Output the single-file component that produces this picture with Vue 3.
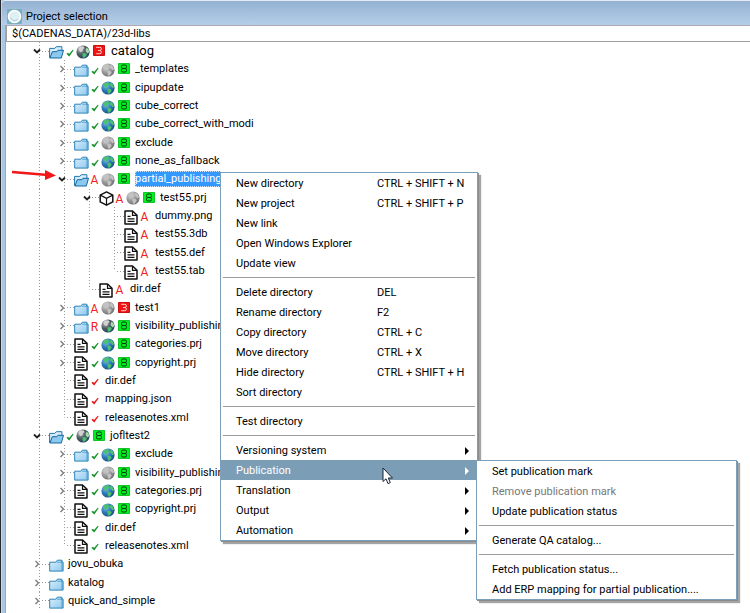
<script setup>
import { ref } from 'vue'

const path = ref('$(CADENAS_DATA)/23d-libs')

const node = (level, name, icon, toggle, status, globe, link, extra = {}) => ({
  level, name, icon, toggle, status, globe, link, ...extra,
})

const nodes = ref([
  node(0, 'catalog', 'folder-open', 'open', 'ok', 'mixed', 'broken', { large: true }),
  node(1, '_templates', 'folder', 'closed', 'ok', 'grey', 'linked'),
  node(1, 'cipupdate', 'folder', 'closed', 'ok', 'colour', 'linked'),
  node(1, 'cube_correct', 'folder', 'closed', 'ok', 'colour', 'linked'),
  node(1, 'cube_correct_with_modi', 'folder', 'closed', 'ok', 'colour', 'linked'),
  node(1, 'exclude', 'folder', 'closed', 'ok', 'grey', 'linked'),
  node(1, 'none_as_fallback', 'folder', 'closed', 'ok', 'colour', 'linked'),
  node(1, 'partial_publishing', 'folder-open', 'open', 'A', 'grey', 'linked', { selected: true }),
  node(2, 'test55.prj', 'cube', 'open', 'A', 'grey', 'linked'),
  node(3, 'dummy.png', 'doc', null, 'A'),
  node(3, 'test55.3db', 'doc', null, 'A'),
  node(3, 'test55.def', 'doc', null, 'A'),
  node(3, 'test55.tab', 'doc', null, 'A', null, null, { last: true }),
  node(2, 'dir.def', 'doc', null, 'A', null, null, { last: true }),
  node(1, 'test1', 'folder', 'closed', 'A', 'grey', 'broken'),
  node(1, 'visibility_publishing', 'folder', 'closed', 'R', 'mixed', 'linked'),
  node(1, 'categories.prj', 'doc', 'closed', 'ok', 'colour', 'linked'),
  node(1, 'copyright.prj', 'doc', 'closed', 'ok', 'colour', 'linked'),
  node(1, 'dir.def', 'doc', null, 'changed'),
  node(1, 'mapping.json', 'doc', null, 'changed'),
  node(1, 'releasenotes.xml', 'doc', null, 'changed', null, null, { last: true }),
  node(0, 'jofltest2', 'folder-open', 'open', 'ok', 'mixed', 'linked'),
  node(1, 'exclude', 'folder', 'closed', 'ok', 'colour', 'linked'),
  node(1, 'visibility_publishing', 'folder', 'closed', 'ok', 'grey', 'linked'),
  node(1, 'categories.prj', 'doc', 'closed', 'ok', 'colour', 'linked'),
  node(1, 'copyright.prj', 'doc', 'closed', 'ok', 'colour', 'linked'),
  node(1, 'dir.def', 'doc', null, 'ok'),
  node(1, 'releasenotes.xml', 'doc', null, 'ok', null, null, { last: true }),
  node(0, 'jovu_obuka', 'folder', 'closed'),
  node(0, 'katalog', 'folder', 'closed'),
  node(0, 'quick_and_simple', 'folder', 'closed'),
])

const menu = [
  [
    { label: 'New directory', keys: 'CTRL + SHIFT + N' },
    { label: 'New project', keys: 'CTRL + SHIFT + P' },
    { label: 'New link' },
    { label: 'Open Windows Explorer' },
    { label: 'Update view' },
  ],
  [
    { label: 'Delete directory', keys: 'DEL' },
    { label: 'Rename directory', keys: 'F2' },
    { label: 'Copy directory', keys: 'CTRL + C' },
    { label: 'Move directory', keys: 'CTRL + X' },
    { label: 'Hide directory', keys: 'CTRL + SHIFT + H' },
    { label: 'Sort directory' },
  ],
  [{ label: 'Test directory' }],
  [
    { label: 'Versioning system', sub: true },
    { label: 'Publication', sub: true, active: true },
    { label: 'Translation', sub: true },
    { label: 'Output', sub: true },
    { label: 'Automation', sub: true },
  ],
]

const submenu = [
  [
    { label: 'Set publication mark' },
    { label: 'Remove publication mark', disabled: true },
    { label: 'Update publication status' },
  ],
  [{ label: 'Generate QA catalog...' }],
  [
    { label: 'Fetch publication status...' },
    { label: 'Add ERP mapping for partial publication....' },
  ],
]

function select(item) {
  nodes.value.forEach((n) => { n.selected = n === item })
}
</script>

<template>
  <div class="window">
    <svg class="defs" aria-hidden="true">
      <defs>
        <linearGradient id="gFolder" x1="0" y1="0" x2="1" y2="1">
          <stop offset="0" stop-color="#d9effb" /><stop offset="1" stop-color="#8fc8ee" />
        </linearGradient>
        <radialGradient id="gBlue" cx=".35" cy=".3" r=".75">
          <stop offset="0" stop-color="#8cc4ec" /><stop offset=".5" stop-color="#2e7cbc" /><stop offset="1" stop-color="#1b4f86" />
        </radialGradient>
        <radialGradient id="gGrey" cx=".35" cy=".3" r=".75">
          <stop offset="0" stop-color="#e2e2e2" /><stop offset=".5" stop-color="#9c9c9c" /><stop offset="1" stop-color="#707070" />
        </radialGradient>
        <radialGradient id="gDark" cx=".3" cy=".3" r=".8">
          <stop offset="0" stop-color="#b4b4b4" /><stop offset=".5" stop-color="#4c5860" /><stop offset="1" stop-color="#1c4568" />
        </radialGradient>
        <symbol id="folder" viewBox="0 0 15 13">
          <path d="M.7 3.200h6.100l1.500-2h4.500v2h1.300v8.900H.7z" fill="url(#gFolder)" stroke="#2c83b8" />
          <path d="M8 3.200h5M13 1.500v10.200" fill="none" stroke="#3f96c9" stroke-width=".8" />
        </symbol>
        <symbol id="folder-open" viewBox="0 0 15 13">
          <path d="M.6 11.800V2.400h5.200l1.500-1.700h5.600v4" fill="#d5edfa" stroke="#2176ad" />
          <path d="M.9 12l2.400-6.300h4.600l1-1.400h5.600L12.300 12z" fill="#8cc9ef" stroke="#14669f" />
        </symbol>
        <symbol id="doc" viewBox="0 0 14 15">
          <path d="M1 1h7.500L13 5.300V14H1z" fill="#fff" stroke="#111" stroke-width="1.500" stroke-linejoin="round" />
          <path d="M8.500 1v4.300H13M3.500 6.300h3M3.500 8.800h7M3.500 11.300h7" fill="none" stroke="#111" stroke-width="1.200" />
        </symbol>
        <symbol id="cube" viewBox="0 0 15 15">
          <path d="M7.500.9l6.300 3.200v6.800l-6.300 3.300-6.300-3.300V4.100z" fill="#fff" stroke="#111" stroke-width="1.500" stroke-linejoin="round" />
          <path d="M1.200 4.100l6.300 3.200 6.300-3.200M7.500 7.300v6.900" fill="none" stroke="#111" stroke-width="1.200" />
        </symbol>
        <symbol id="globe-colour" viewBox="0 0 14 14">
          <circle cx="7" cy="7" r="6.600" fill="url(#gBlue)" />
          <path d="M4 1.400l3.200.2 1.200 1.700-1.600 1.200-.3 1.900-1.700.4-1.800-1.600-.6-2.100zM9.500 1.600l2.200 1.600 1.400 3-1.500 1-1.600-1.600-1.200-1.300zM6.400 7.400l3 .7 1.300 1.500-1.200 2-1.700 1.600-1.200-2.200z" fill="#4cc070" />
        </symbol>
        <symbol id="globe-grey" viewBox="0 0 14 14">
          <circle cx="7" cy="7" r="6.600" fill="url(#gGrey)" />
          <path d="M4 1.400l3.200.2 1.200 1.700-1.600 1.200-.3 1.900-1.700.4-1.800-1.600-.6-2.100zM9.500 1.600l2.200 1.600 1.400 3-1.500 1-1.600-1.600-1.200-1.300zM6.400 7.400l3 .7 1.300 1.500-1.200 2-1.700 1.600-1.200-2.200z" fill="#c2c2c2" />
        </symbol>
        <symbol id="globe-mixed" viewBox="0 0 14 14">
          <circle cx="7" cy="7" r="6.600" fill="url(#gDark)" />
          <path d="M4 1.200l3.600.2 1 1.700-1.800 1.400-.3 2-2 .4-1.900-1.600-.2-2.100z" fill="#d2d2d2" />
          <path d="M10.600 2.400l2 2.200.7 2.300-1.700 1.500-1.800-1.700-.2-2z" fill="#a4dba6" />
          <path d="M6.600 8.200l2.700-.3 1.600 1.700-1.300 2.200-2 1.300-1.100-2.200z" fill="#4cc070" />
        </symbol>
        <symbol id="check" viewBox="0 0 9 9">
          <path d="M.4 5.400l1.900-1.200 1.100 1.500L7.600.8l1 .5-4.900 7.200z" fill="currentColor" />
        </symbol>
        <symbol id="link-linked" viewBox="0 0 12 11">
          <path d="M.5.500h11v10H.5z" fill="#00f022" stroke="#10c428" />
          <rect x="3.500" y="2" width="5" height="3.500" rx="1.400" fill="none" stroke="#043a08" />
          <rect x="3.500" y="5.500" width="5" height="3.500" rx="1.400" fill="none" stroke="#043a08" />
        </symbol>
        <symbol id="link-broken" viewBox="0 0 12 11">
          <path d="M.5.500h11v10H.5z" fill="#f01414" stroke="#c81010" />
          <path d="M3.200 2.300h3.600a1.600 1.600 0 0 1 0 3.200H5M6.800 5.500a1.600 1.600 0 0 1 0 3.200H3.200" fill="none" stroke="#ffd4d0" />
        </symbol>
      </defs>
    </svg>

    <header class="titlebar">
      <svg class="logo" viewBox="0 0 15 15" aria-hidden="true">
        <rect width="15" height="15" rx="1" fill="#78aebf" />
        <circle cx="7.500" cy="7.500" r="6" fill="#dff0f5" stroke="#fff" stroke-width="1.600" />
        <path d="M3.500 8.500a4.200 4.200 0 0 0 7.500 1.500" fill="none" stroke="#a7ccd8" />
      </svg>
      <h1>Project selection</h1>
    </header>

    <input v-model="path" class="path" type="text" aria-label="Project path" spellcheck="false" />

    <main class="body">
      <ul class="tree" role="tree" aria-label="Projects">
        <li
          v-for="(item, i) in nodes"
          :key="i"
          class="row"
          role="treeitem"
          :aria-selected="!!item.selected"
          :aria-level="item.level + 1"
          @click="select(item)"
        >
          <span v-for="l in item.level" :key="l" class="guide"></span>
          <span class="branch" :class="{ last: item.last }">
            <button v-if="item.toggle" class="toggle" type="button" :aria-label="'Toggle ' + item.name">
              <svg v-if="item.toggle === 'open'" class="chevron open" viewBox="0 0 8 8"><path d="M1 2.500l3 3 3-3" /></svg>
              <svg v-else class="chevron" viewBox="0 0 8 8"><path d="M2.500 1l3 3-3 3" /></svg>
            </button>
            <span class="twig"></span>
          </span>
          <svg class="kind" :class="item.icon"><use :href="'#' + item.icon" /></svg>
          <template v-if="item.status">
            <span v-if="item.status.length === 1" class="status letter">{{ item.status }}</span>
            <span v-else class="status" :class="item.status"><svg class="check"><use href="#check" /></svg></span>
          </template>
          <svg v-if="item.globe" class="globe"><use :href="'#globe-' + item.globe" /></svg>
          <svg v-if="item.link" class="link"><use :href="'#link-' + item.link" /></svg>
          <span class="name" :class="{ selected: item.selected, large: item.large }">{{ item.name }}</span>
        </li>
      </ul>
    </main>

    <svg class="pointer" viewBox="0 0 46 12" aria-hidden="true">
      <path d="M1 3l36 3" stroke="#f01818" stroke-width="2.400" fill="none" />
      <path d="M34 1l11 5.500-11 4.500z" fill="#f01818" />
    </svg>

    <div class="menu context" role="menu" aria-label="Directory">
      <div v-for="(group, g) in menu" :key="g" class="group" role="group">
        <button
          v-for="entry in group"
          :key="entry.label"
          class="entry"
          :class="{ active: entry.active }"
          type="button"
          role="menuitem"
        >
          <span class="label">{{ entry.label }}</span>
          <span v-if="entry.keys" class="keys">{{ entry.keys }}</span>
          <svg v-if="entry.sub" class="more" viewBox="0 0 4 8"><path d="M0 0l4 4-4 4z" fill="currentColor" /></svg>
        </button>
      </div>
    </div>

    <div class="menu publication" role="menu" aria-label="Publication">
      <div v-for="(group, g) in submenu" :key="g" class="group" role="group">
        <button
          v-for="entry in group"
          :key="entry.label"
          class="entry"
          type="button"
          role="menuitem"
          :disabled="entry.disabled"
        >
          <span class="label">{{ entry.label }}</span>
        </button>
      </div>
    </div>

    <svg class="cursor" viewBox="0 0 12 18" aria-hidden="true">
      <path d="M1 1v13.500l3-2.700 2 4.800 2.300-1-2-4.600h4.200z" fill="#fff" stroke="#1a2433" />
    </svg>
  </div>
</template>

<style>
body {
  background: #fff;
}
</style>

<style scoped>
.window {
  position: relative;
  box-sizing: border-box;
  display: flex;
  flex-direction: column;
  min-height: 100vh;
  padding-left: 6px;
  overflow: hidden;
  background: linear-gradient(to right, #26292d 0 1px, #c3d8ec 1px 2px, #a9c6e3 2px 5px, #93a9bf 5px 6px, #fff 6px);
  color: #000;
  font: 11px/16px Roboto, "Open Sans", sans-serif;
}
.defs {
  position: absolute;
  width: 0;
  height: 0;
}
.titlebar {
  display: flex;
  align-items: center;
  gap: 4px;
  height: 17px;
  margin-left: -4px;
  padding: 7px 0 0 5px;
  border-top: 1px solid #e4ebf2;
  border-top-left-radius: 4px;
  background: linear-gradient(#94b1d1, #b5cfe9);
}
.logo {
  width: 15px;
  height: 15px;
}
.titlebar h1 {
  margin: 0;
  font-size: 11px;
  font-weight: 400;
}
.path {
  box-sizing: border-box;
  width: 100%;
  height: 17px;
  padding: 0 5px;
  border: 1px solid #a0a0a0;
  border-top-color: #b0a8ac;
  border-right: 0;
  background: #fff;
  color: #000;
  font: inherit;
  line-height: 15px;
  outline: none;
}
.body {
  display: flex;
  flex: 1;
  padding: 0 0 3px 25px;
}
.tree {
  display: grid;
  flex: 1;
  grid-auto-rows: minmax(18px, 1fr);
  margin: 0;
  padding: 0;
  list-style: none;
}
.row {
  display: flex;
  align-items: center;
  min-height: 0;
}
.guide,
.branch {
  align-self: stretch;
  flex: none;
  background: repeating-linear-gradient(#999 0 1px, #fff 1px 3px) 8px 0 / 1px 100% no-repeat;
}
.guide {
  width: 25px;
}
.branch {
  display: flex;
  align-items: center;
  width: 18px;
}
.branch.last {
  background-size: 1px 50%;
}
.toggle {
  display: flex;
  margin: 0 -10px 0 2px;
  padding: 0;
  border: 0;
  background: none;
}
.chevron {
  width: 8px;
  height: 8px;
  fill: none;
  stroke: #7c7c7c;
  stroke-width: 1.4;
}
.chevron.open {
  stroke: #222;
  stroke-width: 1.8;
}
.twig {
  width: 7px;
  height: 1px;
  margin-left: 11px;
  background: repeating-linear-gradient(to right, #999 0 1px, #fff 1px 3px);
}
.kind {
  flex: none;
  width: 15px;
  height: 13px;
  margin: 3px 0 0;
}
.kind.doc {
  width: 14px;
  height: 15px;
  margin: 2px 1px 0 0;
}
.kind.cube {
  height: 15px;
  margin-top: 1px;
}
.status {
  display: flex;
  flex: none;
  justify-content: center;
  width: 11px;
  margin-right: 4px;
}
.status:has(+ .globe) {
  margin-right: 0;
}
.letter {
  color: #f02020;
  font-size: 12px;
  padding-top: 2px;
}
.ok {
  color: #15922a;
}
.changed {
  color: #e81616;
}
.check {
  width: 8px;
  height: 8px;
  margin-top: 3px;
}
.globe {
  flex: none;
  width: 14px;
  height: 14px;
  margin: 1px 3px 0 1px;
}
.link {
  flex: none;
  width: 12px;
  height: 11px;
  margin: 0 4px 1px 0;
}
.name {
  margin-left: 1px;
  line-height: 16px;
  white-space: nowrap;
}
.kind + .name {
  margin-left: 4px;
}
.name.large {
  margin-left: 2px;
  font-size: 13px;
}
.name.selected {
  background: #3399ff;
  color: #fff;
  outline: 1px dotted #cfe4f8;
  outline-offset: -1px;
}
.pointer {
  position: absolute;
  top: 169px;
  left: 11px;
  width: 46px;
  height: 12px;
}
.menu {
  position: absolute;
  box-sizing: border-box;
  border: 1px solid #7b9fb9;
  background: #fff;
  box-shadow: 1px 1px 0 #8b8b8b, 3px 3px 1px #a4a4a4;
}
.context {
  top: 172px;
  left: 220px;
  width: 258px;
}
.publication {
  top: 460px;
  left: 476px;
  width: 261px;
}
.group + .group::before {
  display: block;
  height: 1px;
  margin: 4px 2px;
  background: #9c9c9c;
  content: "";
}
.entry {
  display: grid;
  grid-template-columns: 141px 1fr auto;
  align-items: center;
  box-sizing: border-box;
  width: 100%;
  height: 20px;
  padding: 1px 8px 0 15px;
  border: 0;
  background: none;
  color: #000;
  font: inherit;
  text-align: left;
  white-space: nowrap;
}
.entry.active {
  background: #7b9db5;
  color: #fff;
}
.entry:disabled {
  color: #777;
}
.more {
  grid-column: 3;
  width: 4px;
  height: 8px;
}
.cursor {
  position: absolute;
  top: 467px;
  left: 382px;
  width: 12px;
  height: 18px;
}
</style>
